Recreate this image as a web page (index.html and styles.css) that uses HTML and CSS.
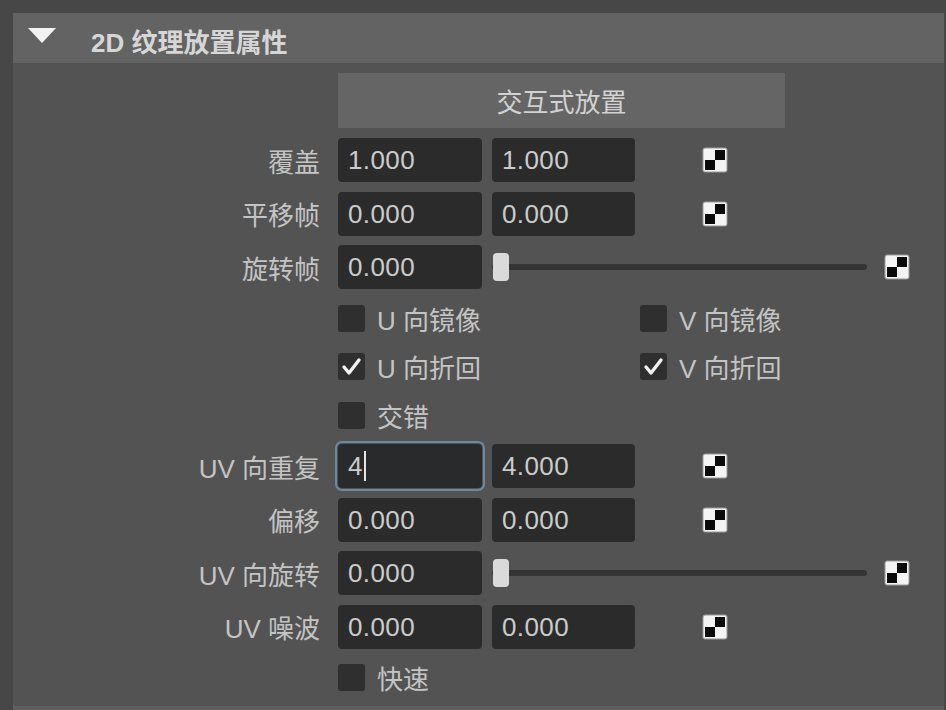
FILE: index.html
```html
<!DOCTYPE html>
<html lang="zh">
<head>
<meta charset="utf-8">
<link rel="stylesheet" href="styles.css">
</head>
<body>
<div class="section">
  <div class="header"><span class="tri"></span><span class="title">2D 纹理放置属性</span></div>
  <div class="body">
    <div class="btn-row"><div class="btn">交互式放置</div></div>

    <div class="row">
      <div class="lbl">覆盖</div>
      <div class="field">1.000</div><div class="field f2">1.000</div>
      <svg class="map" viewBox="0 0 26 26"><rect x="1" y="1" width="24" height="24" rx="2" fill="#f4f4f4" stroke="#9a9a9a" stroke-width="1"/><rect x="13" y="3" width="10" height="10" fill="#0a0a0a"/><rect x="3" y="13" width="10" height="10" fill="#0a0a0a"/></svg>
    </div>
    <div class="row">
      <div class="lbl">平移帧</div>
      <div class="field">0.000</div><div class="field f2">0.000</div>
      <svg class="map" viewBox="0 0 26 26"><rect x="1" y="1" width="24" height="24" rx="2" fill="#f4f4f4" stroke="#9a9a9a" stroke-width="1"/><rect x="13" y="3" width="10" height="10" fill="#0a0a0a"/><rect x="3" y="13" width="10" height="10" fill="#0a0a0a"/></svg>
    </div>
    <div class="row">
      <div class="lbl">旋转帧</div>
      <div class="field">0.000</div>
      <div class="slider"><div class="track"></div><div class="handle"></div></div>
      <svg class="map map-s" viewBox="0 0 26 26"><rect x="1" y="1" width="24" height="24" rx="2" fill="#f4f4f4" stroke="#9a9a9a" stroke-width="1"/><rect x="13" y="3" width="10" height="10" fill="#0a0a0a"/><rect x="3" y="13" width="10" height="10" fill="#0a0a0a"/></svg>
    </div>

    <div class="crow">
      <div class="cb-item"><span class="box"></span><span class="ctext">U 向镜像</span></div>
      <div class="cb-item"><span class="box"></span><span class="ctext">V 向镜像</span></div>
    </div>
    <div class="crow">
      <div class="cb-item"><span class="box"><svg class="tick" viewBox="0 0 27 27"><polyline points="6,14 11,20 21,7" fill="none" stroke="#f2f2f2" stroke-width="3.4" stroke-linecap="round" stroke-linejoin="round"/></svg></span><span class="ctext">U 向折回</span></div>
      <div class="cb-item"><span class="box"><svg class="tick" viewBox="0 0 27 27"><polyline points="6,14 11,20 21,7" fill="none" stroke="#f2f2f2" stroke-width="3.4" stroke-linecap="round" stroke-linejoin="round"/></svg></span><span class="ctext">V 向折回</span></div>
    </div>
    <div class="crow">
      <div class="cb-item"><span class="box"></span><span class="ctext">交错</span></div>
    </div>

    <div class="row">
      <div class="lbl">UV 向重复</div>
      <div class="field focus">4<span class="caret"></span></div><div class="field f2">4.000</div>
      <svg class="map" viewBox="0 0 26 26"><rect x="1" y="1" width="24" height="24" rx="2" fill="#f4f4f4" stroke="#9a9a9a" stroke-width="1"/><rect x="13" y="3" width="10" height="10" fill="#0a0a0a"/><rect x="3" y="13" width="10" height="10" fill="#0a0a0a"/></svg>
    </div>
    <div class="row">
      <div class="lbl">偏移</div>
      <div class="field">0.000</div><div class="field f2">0.000</div>
      <svg class="map" viewBox="0 0 26 26"><rect x="1" y="1" width="24" height="24" rx="2" fill="#f4f4f4" stroke="#9a9a9a" stroke-width="1"/><rect x="13" y="3" width="10" height="10" fill="#0a0a0a"/><rect x="3" y="13" width="10" height="10" fill="#0a0a0a"/></svg>
    </div>
    <div class="row">
      <div class="lbl">UV 向旋转</div>
      <div class="field">0.000</div>
      <div class="slider"><div class="track"></div><div class="handle"></div></div>
      <svg class="map map-s" viewBox="0 0 26 26"><rect x="1" y="1" width="24" height="24" rx="2" fill="#f4f4f4" stroke="#9a9a9a" stroke-width="1"/><rect x="13" y="3" width="10" height="10" fill="#0a0a0a"/><rect x="3" y="13" width="10" height="10" fill="#0a0a0a"/></svg>
    </div>
    <div class="row">
      <div class="lbl">UV 噪波</div>
      <div class="field">0.000</div><div class="field f2">0.000</div>
      <svg class="map" viewBox="0 0 26 26"><rect x="1" y="1" width="24" height="24" rx="2" fill="#f4f4f4" stroke="#9a9a9a" stroke-width="1"/><rect x="13" y="3" width="10" height="10" fill="#0a0a0a"/><rect x="3" y="13" width="10" height="10" fill="#0a0a0a"/></svg>
    </div>

    <div class="crow">
      <div class="cb-item"><span class="box"></span><span class="ctext">快速</span></div>
    </div>
  </div>
  <div class="next"></div>
</div>
</body>
</html>
```

FILE: styles.css
```css
html, body {
  margin: 0;
  padding: 0;
  background: #474747;
  width: 946px;
  height: 710px;
  overflow: hidden;
}
body {
  font-family: "Liberation Sans", "Noto Sans CJK SC", sans-serif;
  font-size: 26px;
  color: #c6c6c6;
}
.section {
  margin: 13px 2px 0 13px;
}
.header {
  height: 50px;
  background: #636363;
  display: flex;
  align-items: center;
}
.tri {
  width: 0;
  height: 0;
  border-left: 14.5px solid transparent;
  border-right: 14.5px solid transparent;
  border-top: 15px solid #f2f2f2;
  margin-left: 15px;
  margin-bottom: 5px;
}
.title {
  margin-left: 35px;
  padding-top: 5px;
  font-weight: bold;
  font-size: 26px;
  color: #d6d6d6;
}
.body {
  background: #535353;
  height: 643px;
  padding-top: 10px;
  box-sizing: border-box;
}
.btn-row {
  height: 60.25px;
  padding-left: 325px;
}
.btn {
  width: 447px;
  height: 55px;
  background: #656565;
  color: #d2d2d2;
  display: flex;
  align-items: center;
  justify-content: center;
}
.row {
  height: 53.5px;
  display: flex;
  align-items: center;
}
.lbl {
  width: 325px;
  padding-right: 18px;
  box-sizing: border-box;
  text-align: right;
  color: #c4c4c4;
}
.field {
  width: 144px;
  height: 44px;
  box-sizing: border-box;
  background: #2b2b2b;
  border-radius: 4px;
  padding-left: 10px;
  line-height: 44px;
  color: #cbcbcb;
  letter-spacing: 0.4px;
  display: flex;
  align-items: center;
}
.f2 {
  width: 143px;
  margin-left: 10px;
}
.focus {
  outline: 2px solid #6a8aa2;
  outline-offset: 1px;
  background: #282a2c;
}
.caret {
  width: 2px;
  height: 30px;
  background: #e6e6e6;
  margin-left: 1px;
}
.map {
  width: 26px;
  height: 26px;
  margin-left: 67px;
  flex: none;
}
.map-s {
  margin-left: 17px;
}
.slider {
  position: relative;
  width: 375px;
  height: 44px;
  margin-left: 10px;
  display: flex;
  align-items: center;
}
.track {
  width: 100%;
  height: 6px;
  background: #353535;
  border-radius: 3px;
}
.handle {
  position: absolute;
  left: 1px;
  top: 8px;
  width: 16px;
  height: 28px;
  background: #dadada;
  border-radius: 4px;
}
.crow {
  height: 48.5px;
  display: flex;
  align-items: center;
  padding-left: 325px;
}
.cb-item {
  width: 302px;
  display: flex;
  align-items: center;
}
.box {
  width: 27px;
  height: 27px;
  background: #2f2f2f;
  border-radius: 3px;
  display: flex;
  flex: none;
}
.tick {
  width: 27px;
  height: 27px;
}
.ctext {
  margin-left: 12px;
  color: #c4c4c4;
}
.next {
  height: 6px;
  background: #5f5f5f;
}
```
